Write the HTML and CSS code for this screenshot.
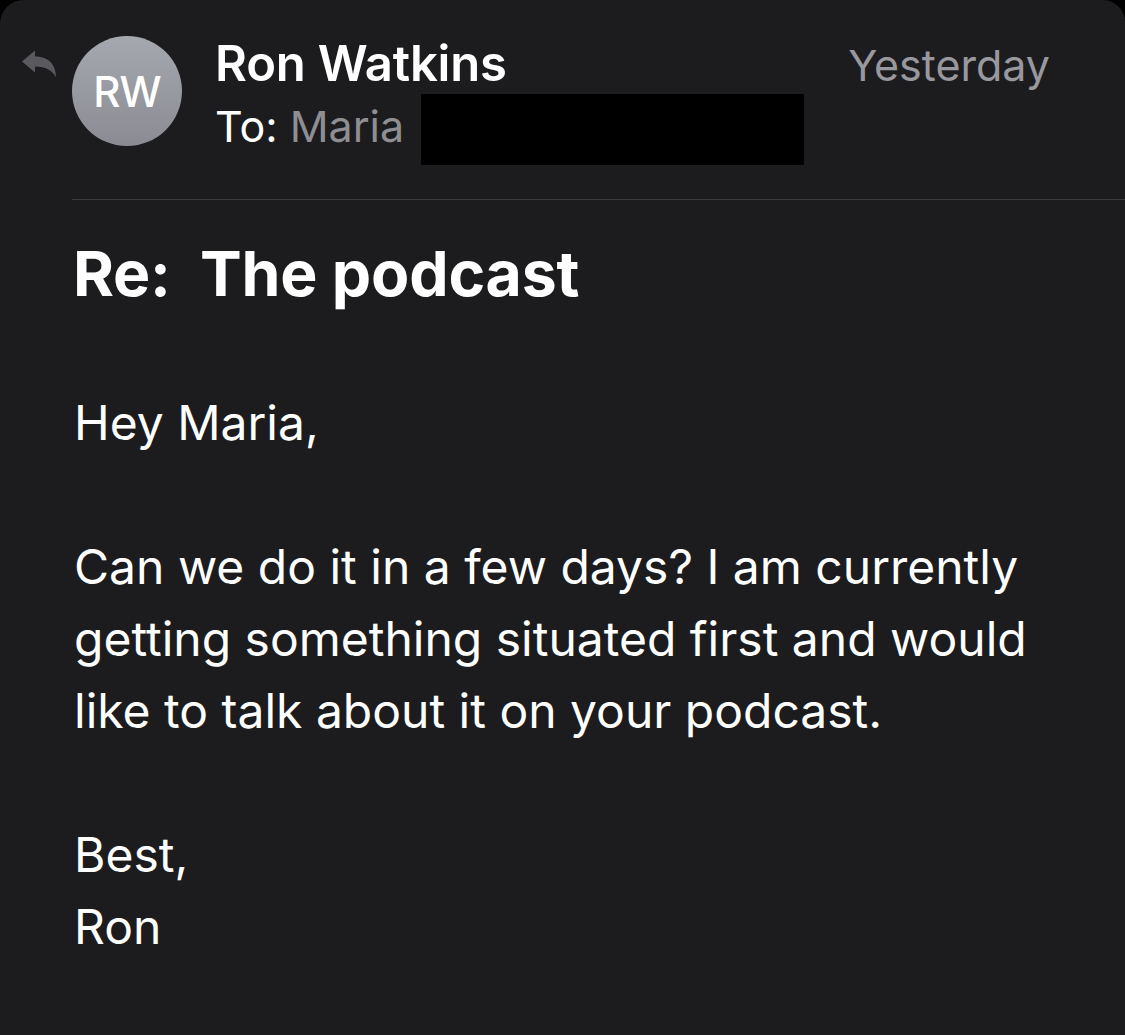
FILE: index.html
```html
<!DOCTYPE html>
<html lang="en">
<head>
<meta charset="utf-8">
<title>Re: The podcast</title>
<link rel="stylesheet" href="styles.css">
</head>
<body>
<div class="card">
  <header class="header">
    <svg class="reply" viewBox="0 0 34 28" width="34" height="28" aria-hidden="true">
      <path d="M0 11.5 L13 0.5 V6.5 C25 6.5 34 13 34 27.5 C30 20 23.5 16.5 13 16.5 V22.5 Z" fill="#5a5a5e"/>
    </svg>
    <div class="avatar">RW</div>
    <div class="meta">
      <div class="name">Ron Watkins</div>
      <div class="to-row">
        <span class="to">To: <span class="to-name">Maria</span></span>
        <span class="redact"></span>
      </div>
    </div>
    <div class="date">Yesterday</div>
  </header>
  <div class="divider"></div>
  <h1 class="subject">Re:&nbsp; The podcast</h1>
  <div class="body">
    <p>Hey Maria,</p>
    <p>Can we do it in a few days? I am currently getting something situated first and would like to talk about it on your podcast.</p>
    <p>Best,<br>Ron</p>
  </div>
</div>
</body>
</html>
```
FILE: styles.css
```css
html, body {
  margin: 0;
  padding: 0;
  background: #000;
}
body {
  font-family: Inter, "Noto Sans", "Liberation Sans", sans-serif;
  color: #fff;
  width: 1125px;
  height: 1035px;
  overflow: hidden;
}
.card {
  background: #1c1c1e;
  height: 1035px;
  border-radius: 24px 22px 0 0;
}
.header {
  display: flex;
  align-items: flex-start;
  padding: 36px 75px 0 22px;
}
.reply {
  display: block;
  margin-top: 14px;
  flex: none;
}
.avatar {
  flex: none;
  width: 110px;
  height: 110px;
  margin-left: 16px;
  border-radius: 50%;
  background: linear-gradient(180deg, #a6a8af 0%, #8a8b93 100%);
  display: flex;
  align-items: center;
  justify-content: center;
  font-size: 42px;
  font-weight: 500;
  letter-spacing: -1px;
  color: #fff;
}
.meta {
  flex: 1;
  margin-left: 33px;
}
.name {
  font-size: 49px;
  font-weight: 600;
  line-height: 56px;
  letter-spacing: -0.2px;
}
.to-row {
  display: flex;
  align-items: flex-start;
  margin-top: 2px;
}
.to {
  font-size: 43px;
  line-height: 60px;
  margin-top: 2px;
  color: #fff;
}
.to-name {
  color: #8e8e93;
}
.redact {
  display: block;
  width: 383px;
  height: 71px;
  background: #000;
  margin-left: 17px;
}
.date {
  flex: none;
  font-size: 43px;
  line-height: 56px;
  margin-top: 1px;
  color: #98989e;
}
.divider {
  height: 1px;
  background: #3a3a3c;
  margin: 34px 0 0 72px;
}
.subject {
  margin: 36px 0 0 73px;
  font-size: 62.5px;
  font-weight: 700;
  line-height: 75px;
  letter-spacing: -0.2px;
}
.body {
  margin: 76px 0 0 74px;
  padding-right: 60px;
  font-size: 48px;
  line-height: 72px;
}
.body p {
  margin: 0 0 72px 0;
}
```
